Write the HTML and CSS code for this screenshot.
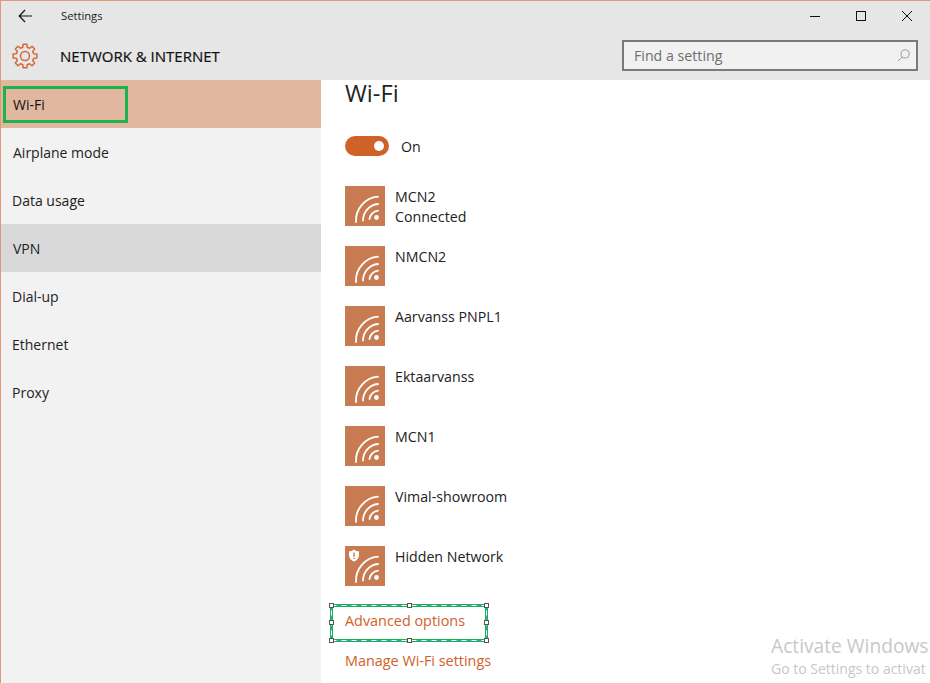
FILE: index.html
```html
<!DOCTYPE html>
<html lang="en">
<head>
<meta charset="utf-8">
<title>Settings</title>
<link rel="stylesheet" href="styles.css">
</head>
<body>
<svg class="defs" width="0" height="0">
  <defs>
    <g id="wifi" fill="none" stroke="#fff" stroke-linecap="round">
      <circle cx="31.500" cy="31.500" r="2.400" fill="#fff" stroke="none"/>
      <path class="a1" stroke-width="1.800" d="M24.500 33A9.500 9.500 0 0 1 33 24.700"/>
      <path class="a2" stroke-width="1.800" d="M18 34.500A16.500 16.500 0 0 1 33 18"/>
      <path class="a3" stroke-width="1.800" d="M11 36A24 24 0 0 1 33 10.700"/>
    </g>
  </defs>
</svg>
<div class="window">
  <header class="header">
    <div class="titlebar">
      <svg class="back" width="16" height="14" viewBox="0 0 16 14"><path d="M7 1 1.200 7 7 13M1.500 7H14" fill="none" stroke="#111" stroke-width="1.200"/></svg>
      <span class="app-title">Settings</span>
      <div class="controls">
        <svg width="12" height="12" viewBox="0 0 12 12"><path d="M1 6.500h10" stroke="#111" stroke-width="1"/></svg>
        <svg width="12" height="12" viewBox="0 0 12 12"><rect x="1.500" y="1.500" width="9" height="9" fill="none" stroke="#111" stroke-width="1"/></svg>
        <svg width="12" height="12" viewBox="0 0 12 12"><path d="M1 1l10 10M11 1 1 11" stroke="#111" stroke-width="1"/></svg>
      </div>
    </div>
    <div class="headbar">
      <svg class="gear" width="26" height="26" viewBox="-13 -13 26 26" fill="none" stroke="#d2693a" stroke-width="1.500" stroke-linejoin="round">
        <circle r="4.500"/>
        <polygon points="-2.180,-8.730 -1.880,-11.850 1.880,-11.850 2.180,-8.730 4.630,-7.710 7.050,-9.710 9.710,-7.050 7.710,-4.630 8.730,-2.180 11.850,-1.880 11.850,1.880 8.730,2.180 7.710,4.630 9.710,7.050 7.050,9.710 4.630,7.710 2.180,8.730 1.880,11.850 -1.880,11.850 -2.180,8.730 -4.630,7.710 -7.050,9.710 -9.710,7.050 -7.710,4.630 -8.730,2.180 -11.850,1.880 -11.850,-1.880 -8.730,-2.180 -7.710,-4.630 -9.710,-7.050 -7.050,-9.710 -4.630,-7.710"/>
      </svg>
      <h1 class="section-title">NETWORK &amp; INTERNET</h1>
      <div class="search">
        <span>Find a setting</span>
        <svg width="13" height="13" viewBox="0 0 16 16" fill="none" stroke="#999" stroke-width="1.200"><circle cx="10" cy="6" r="5"/><path d="M6.500 9.500 1 15"/></svg>
      </div>
    </div>
  </header>
  <div class="body">
    <nav class="sidebar">
      <div class="nav-item selected">Wi-Fi</div>
      <div class="nav-item">Airplane mode</div>
      <div class="nav-item shift">Data usage</div>
      <div class="nav-item hover">VPN</div>
      <div class="nav-item shift">Dial-up</div>
      <div class="nav-item shift">Ethernet</div>
      <div class="nav-item shift">Proxy</div>
      <div class="mark-green"></div>
    </nav>
    <main class="content">
      <h2 class="page-title">Wi-Fi</h2>
      <div class="toggle-row"><span class="toggle"><span class="knob"></span></span><span>On</span></div>
      <ul class="networks">
        <li class="net strong"><span class="tile"><svg width="40" height="40"><use href="#wifi"/></svg></span><span class="net-text">MCN2<br>Connected</span></li>
        <li class="net strong"><span class="tile"><svg width="40" height="40"><use href="#wifi"/></svg></span><span class="net-text">NMCN2</span></li>
        <li class="net weak"><span class="tile"><svg width="40" height="40"><use href="#wifi"/></svg></span><span class="net-text">Aarvanss PNPL1</span></li>
        <li class="net weak"><span class="tile"><svg width="40" height="40"><use href="#wifi"/></svg></span><span class="net-text">Ektaarvanss</span></li>
        <li class="net weak"><span class="tile"><svg width="40" height="40"><use href="#wifi"/></svg></span><span class="net-text">MCN1</span></li>
        <li class="net weak"><span class="tile"><svg width="40" height="40"><use href="#wifi"/></svg></span><span class="net-text">Vimal-showroom</span></li>
        <li class="net weak"><span class="tile"><svg width="40" height="40"><use href="#wifi"/></svg>
          <svg class="shield" width="12" height="13" viewBox="0 0 12 13"><path d="M6 .500C4.500 1.800 2.800 2.300 1 2.300v4C1 9.300 3 11.500 6 12.500c3-1 5-3.200 5-6.200v-4C9.200 2.300 7.500 1.800 6 .500z" fill="#fff"/><path d="M6 3.500v4.200M6 8.800v1.300" stroke="#c87a50" stroke-width="1.400"/></svg></span><span class="net-text">Hidden Network</span></li>
      </ul>
      <div class="links">
        <a class="link">Advanced options</a>
        <a class="link">Manage Wi-Fi settings</a>
      </div>
      <div class="selection">
        <svg class="sel-lines" width="158" height="38" fill="none">
          <rect x="1.500" y="1.500" width="155" height="35" stroke="#1eb24f" stroke-width="3"/>
          <rect x="1.500" y="1.500" width="155" height="35" stroke="#2a9fd0" stroke-width="1"/>
          <rect x="1.500" y="1.500" width="155" height="35" stroke="#fff" stroke-width="1" stroke-dasharray="5 5"/>
        </svg>
        <i class="h tl"></i><i class="h tc"></i><i class="h tr"></i>
        <i class="h ml"></i><i class="h mr"></i>
        <i class="h bl"></i><i class="h bc"></i><i class="h br"></i>
      </div>
      <div class="watermark">
        <div class="wm-1">Activate Windows</div>
        <div class="wm-2">Go to Settings to activat</div>
      </div>
    </main>
  </div>
</div>
</body>
</html>
```

FILE: styles.css
```css
* { box-sizing: border-box; }
html, body { margin: 0; height: 100%; overflow: hidden; }
body { font-family: "Open Sans", "Liberation Sans", sans-serif; font-size: 14px; color: #1a1a1a; background: #fff; }
.defs { position: absolute; }
.window { width: 930px; height: 683px; display: flex; flex-direction: column; border-top: 1px solid #dc9a78; border-left: 1px solid #dc9a78; overflow: hidden; }
.header { height: 79px; flex: none; background: #e6e6e6; display: flex; flex-direction: column; }
.titlebar { height: 29px; flex: none; display: flex; align-items: center; padding-left: 17px; }
.back { display: block; }
.app-title { margin-left: 27px; font-size: 11.200px; color: #222; }
.controls { margin-left: auto; display: flex; gap: 34px; padding-right: 17px; }
.controls svg { display: block; }
.headbar { flex: 1; display: flex; align-items: center; padding: 2px 12px 0 11px; }
.gear { display: block; }
.section-title { margin: 0 0 0 22px; font-size: 15px; font-weight: 400; -webkit-text-stroke: .2px #111; color: #111; }
.search { margin-left: auto; width: 296px; height: 31px; margin-top: -1px; background: #f1f1f1; border: 2px solid #7a7a7a; display: flex; align-items: center; justify-content: space-between; padding: 0 6px 0 10px; color: #6e6e6e; font-size: 14.200px; }
.body { flex: 1; display: flex; min-height: 0; }
.sidebar { position: relative; width: 320px; flex: none; background: #f2f2f2; }
.nav-item { height: 48px; display: flex; align-items: center; padding-left: 12px; font-size: 14px; color: #222; }
.nav-item.shift { padding-left: 11px; }
.nav-item.selected { background: #e1b7a0; color: #111; }
.nav-item.hover { background: #d9d9d9; }
.mark-green { position: absolute; left: 2px; top: 6px; width: 125px; height: 37px; border: 3px solid #1eb24f; }
.content { position: relative; flex: 1; padding-left: 24px; overflow: hidden; }
.page-title { margin: 0; font-size: 23.700px; font-weight: 400; line-height: 26px; color: #222; }
.toggle-row { margin-top: 30px; display: flex; align-items: center; gap: 12px; height: 20px; font-size: 14.200px; }
.toggle { width: 44px; height: 20px; border-radius: 10px; background: #cf6229; display: block; position: relative; }
.knob { position: absolute; right: 5px; top: 5px; width: 10px; height: 10px; border-radius: 50%; background: #fff; }
.networks { list-style: none; margin: 30px 0 0; padding: 0; display: flex; flex-direction: column; gap: 20px; }
.net { display: flex; height: 40px; gap: 10px; }
.tile { position: relative; width: 40px; height: 40px; background: #c87a50; display: block; flex: none; }
.tile > svg { display: block; }
.tile .shield { position: absolute; left: 3px; top: 3px; }
.net-text { line-height: 20px; margin-top: 1px; color: #222; font-size: 14.200px; }
.weak .a2 { opacity: .8; }
.weak .a3 { opacity: .4; }
.links { margin-top: 25px; display: flex; flex-direction: column; gap: 20px; }
.link { color: #cf6229; line-height: 20px; font-size: 14.400px; }
.selection { position: absolute; left: 9px; top: 524px; width: 158px; height: 38px; }
.sel-lines { display: block; }
.h { position: absolute; width: 5px; height: 5px; background: #fff; border: 1px solid #555; }
.tl { left: -1px; top: -1px; } .tc { left: 77px; top: -1px; } .tr { right: -1px; top: -1px; }
.ml { left: -1px; top: 16px; } .mr { right: -1px; top: 16px; }
.bl { left: -1px; bottom: -1px; } .bc { left: 77px; bottom: -1px; } .br { right: -1px; bottom: -1px; }
.watermark { position: absolute; left: 450px; top: 554px; white-space: nowrap; color: #c8c8c8; }
.wm-1 { font-size: 19.200px; line-height: 24px; }
.wm-2 { font-size: 14px; line-height: 21px; }
```
